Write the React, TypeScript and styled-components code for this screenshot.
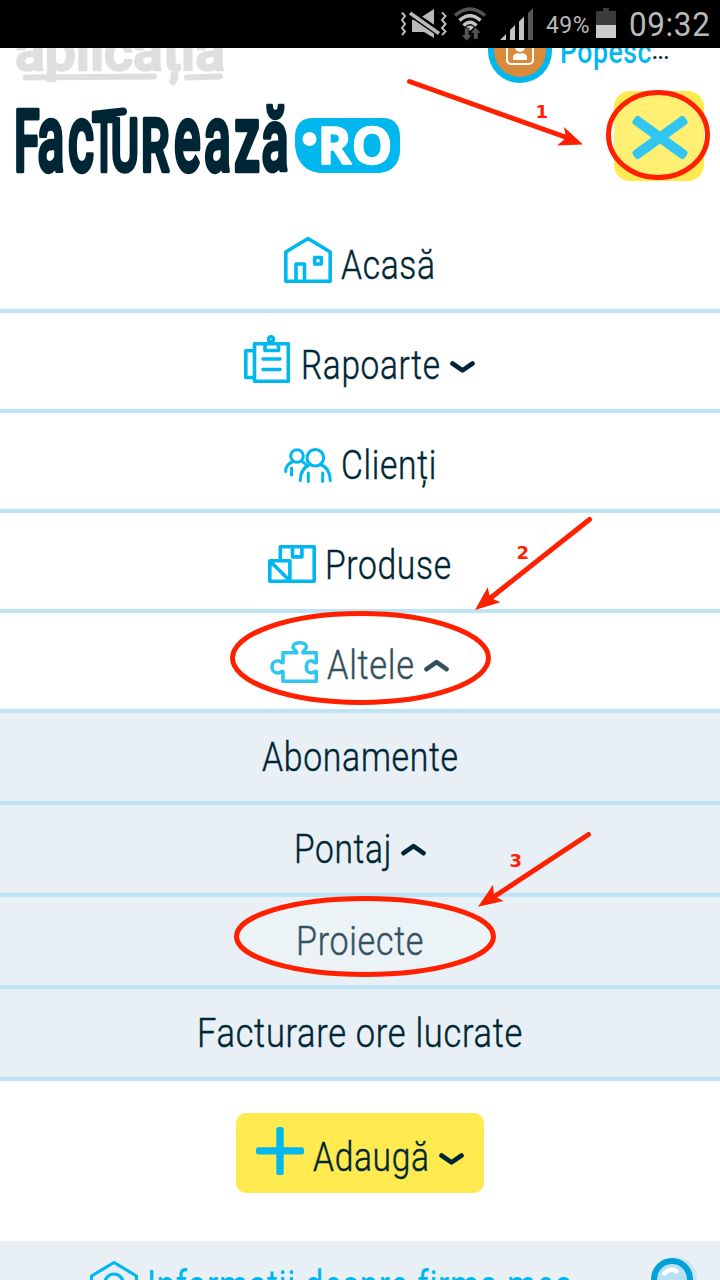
import React, { useLayoutEffect, useRef, useState } from 'react';
import styled, { createGlobalStyle } from 'styled-components';

const CYAN = '#00b7ee';
const NAVY = '#002635';
const RED = '#ff2000';

const GlobalStyle = createGlobalStyle`
  html, body { margin: 0; padding: 0; background: #fff; }
  body { font-family: Roboto, "Liberation Sans", sans-serif; overflow: hidden; }
  * { box-sizing: border-box; }
`;

const Screen = styled.div`
  position: relative;
  display: flex;
  flex-direction: column;
  width: 720px;
  height: 1280px;
  overflow: hidden;
  background: #fff;
`;

const StatusBar = styled.div`
  display: flex;
  flex: none;
  height: 48px;
  padding: 0 11px 0 400px;
  background: #000;
  color: #b9b9b9;
`;

const StatusIcons = styled.svg`
  flex: none;
  width: 140px;
  height: 48px;
`;

const BatteryIcon = styled.svg`
  flex: none;
  width: 20px;
  height: 48px;
  margin-left: 7px;
`;

const Percent = styled.div`
  flex: none;
  width: 43px;
  margin-left: 6px;
`;

const Clock = styled.div`
  flex: none;
  margin-left: 13px;
`;

const Header = styled.header`
  display: flex;
  flex: none;
  justify-content: space-between;
  height: 165px;
  padding: 0 16px;
  overflow: hidden;
`;

const Brand = styled.svg`
  flex: none;
  width: 386px;
  height: 165px;
`;

const HeaderSide = styled.div`
  display: flex;
  flex-direction: column;
  align-items: flex-end;
  width: 216px;
`;

const User = styled.div`
  display: flex;
  flex: none;
  width: 216px;
  height: 43px;
`;

const Avatar = styled.svg`
  flex: none;
  width: 64px;
  height: 36px;
`;

const UserName = styled.div`
  display: flex;
  height: 42px;
  margin: -17px 0 0 8px;
`;

const Ellipsis = styled.span`
  font-size: 20px;
  font-weight: 700;
  line-height: 42px;
  color: ${NAVY};
`;

const CloseButton = styled.button`
  display: block;
  flex: none;
  width: 90px;
  height: 90px;
  padding: 0;
  border: 0;
  border-radius: 16px;
  background: #ffeb50;
`;

const Menu = styled.nav`
  display: flex;
  flex: none;
  flex-direction: column;
`;

const Row = styled.a<{ $sub?: boolean }>`
  display: flex;
  justify-content: center;
  align-items: flex-start;
  height: ${(p) => (p.$sub ? 92 : 100)}px;
  padding-top: ${(p) => (p.$sub ? 14 : 22)}px;
  border-bottom: 4px solid #bfe4f5;
  background: ${(p) => (p.$sub ? '#e8f0f6' : '#fff')};
`;

const AddButton = styled.button`
  display: flex;
  flex: none;
  align-self: center;
  justify-content: center;
  align-items: flex-start;
  width: 248px;
  height: 80px;
  margin: 32px 0 48px;
  padding: 14px 0 0;
  border: 0;
  border-radius: 10px;
  background: #ffeb50;
  font-family: inherit;
`;

const RowIcon = styled.svg<{ $thin?: boolean }>`
  flex: none;
  width: 48px;
  height: 49px;
  margin-right: 9px;
  fill: none;
  stroke: ${CYAN};
  stroke-width: ${(p) => (p.$thin ? 3 : 3.6)};
  stroke-linecap: round;
  stroke-linejoin: round;
`;

const ChevronIcon = styled.svg`
  flex: none;
  width: 25px;
  height: 14px;
  margin: 24px 1px 0 9px;
  fill: none;
  stroke: ${NAVY};
  stroke-width: 4.6;
  stroke-linecap: round;
  stroke-linejoin: round;
`;

const LabelBox = styled.span<{ $w: number; $color?: string; $size?: number; $weight?: number; $top?: number }>`
  display: block;
  flex: none;
  width: ${(p) => p.$w}px;
  height: 48px;
  margin-top: ${(p) => p.$top ?? 6}px;
  font-size: ${(p) => p.$size ?? 41}px;
  font-weight: ${(p) => p.$weight ?? 300};
  line-height: 48px;
  color: ${(p) => p.$color ?? NAVY};
  white-space: nowrap;
  ${(p) => (p.$weight ? '' : '-webkit-text-stroke: 0.45px currentColor;')}
`;

const LabelInk = styled.span`
  display: inline-block;
  letter-spacing: 0.02em;
  transform-origin: 0 50%;
`;

const Footer = styled.footer`
  display: flex;
  flex: 1;
  padding: 0 22px 0 90px;
  background: #e8f0f6;
  overflow: hidden;
`;

const FirmIcon = styled.svg`
  flex: none;
  width: 48px;
  height: 39px;
  margin-right: 9px;
`;

const SearchIcon = styled.svg`
  flex: none;
  width: 52px;
  height: 39px;
  margin-left: auto;
`;

const Annotations = styled.svg`
  position: absolute;
  inset: 0;
  width: 720px;
  height: 1280px;
  pointer-events: none;
`;

type LabelProps = { text: string; w: number; color?: string; size?: number; weight?: number; top?: number };

/* Condenses the text horizontally so that it fills its width. */
function Label({ text, w, color, size, weight, top }: LabelProps) {
  const ref = useRef<HTMLSpanElement>(null);
  const [scale, setScale] = useState(1);
  useLayoutEffect(() => {
    if (ref.current) setScale(w / ref.current.offsetWidth);
  }, [text, w]);
  return (
    <LabelBox $w={w} $color={color} $size={size} $weight={weight} $top={top}>
      <LabelInk ref={ref} style={{ transform: `scaleX(${scale})` }}>{text}</LabelInk>
    </LabelBox>
  );
}

const Chevron = ({ up }: { up?: boolean }) => (
  <ChevronIcon viewBox="0 0 25 14">
    <path d={up ? 'M2.5 10.2 12.5 3.2 22.5 10.2' : 'M2.5 4.5 12.5 11.3 22.5 4.5'} />
  </ChevronIcon>
);

const icons: Record<string, React.ReactNode> = {
  home: <path d="M1.800 17 24 3.500 46.200 17V46.300H1.800ZM12 46V29H20.500V46M30.700 22.500H37.300V29H30.700Z" />,
  reports: (
    <>
      <path d="M10.500 8.800H44.300V46.200H10.500ZM10.500 15.800H1.800V42.500H10.500M21 9V15.500H34.500V9M19 24H36M19 34.500H36" />
      <circle cx="27" cy="4.300" r="2.500" />
    </>
  ),
  clients: (
    <>
      <circle cx="13" cy="21" r="6.300" />
      <circle cx="31.300" cy="22.700" r="8.300" />
      <path d="M1.700 36.500C1.700 31 5 28 9 26.500M17.500 26 21.500 29M16.300 45.500C16.300 37 20 32 26 29.500M36.500 29.500C43 32 46.300 38 46.300 45.500M7.500 33V40M24.300 38V46.500M38.700 38V46.500" />
    </>
  ),
  products: <path d="M12.300 24V11.800H46.200V46.200H22M24.500 12V21.900H33.900V12M1.800 25.800H21.900V46.200H1.800ZM3 27 21 45" />,
  puzzle: (
    <path d="M13 17.800H26.500C27.500 16 23 15 23 12C23 6.300 36.500 6.300 36.500 12C36.500 15 32 16 33 17.800H46.300V27.500C44.500 28.500 43.500 25.800 41 25.800C34.800 25.800 34.800 38 41 38C43.500 38 44.500 35.500 46.300 36.500V46.300H13V36.500C11.500 35.500 10.500 38 8 38C0 38 0 25.800 8 25.800C10.500 25.800 11.500 28.500 13 27.500Z" />
  ),
  plus: (
    <g fill={CYAN} stroke="none">
      <rect x="20.300" y="0" width="7.400" height="48" rx="2.500" />
      <rect x="0" y="20.200" width="48" height="7.400" rx="2.500" />
    </g>
  ),
};

const Icon = ({ name }: { name: string }) => (
  <RowIcon viewBox="0 0 48 49" $thin={name === 'clients'}>{icons[name]}</RowIcon>
);

type Item = { text: string; w: number; icon?: string; chevron?: 'up' | 'down'; sub?: boolean };

const items: Item[] = [
  { text: 'Acasă', w: 95, icon: 'home' },
  { text: 'Rapoarte', w: 140, icon: 'reports', chevron: 'down' },
  { text: 'Clienți', w: 96, icon: 'clients' },
  { text: 'Produse', w: 127, icon: 'products' },
  { text: 'Altele', w: 88, icon: 'puzzle', chevron: 'up' },
  { text: 'Abonamente', w: 197, sub: true },
  { text: 'Pontaj', w: 98, chevron: 'up', sub: true },
  { text: 'Proiecte', w: 128, sub: true },
  { text: 'Facturare ore lucrate', w: 326, sub: true },
];

/* Letters of the word mark: glyph, origin, font size, width scale. */
const wordmark: [string, number, number, number][] = [
  ['F', 14, 86, 0.54],
  ['a', 37.5, 94, 0.53],
  ['c', 68, 94, 0.53],
  ['T', 92, 82, 0.48],
  ['U', 111, 73, 0.58],
  ['R', 141, 73, 0.62],
  ['e', 174, 94, 0.53],
  ['a', 204, 94, 0.53],
  ['z', 234, 94, 0.55],
  ['ă', 261.5, 88, 0.57],
];

const BrandMark = () => (
  <Brand viewBox="16 48 386 165">
    <g fill="#dfdfdf" stroke="#dfdfdf" strokeLinecap="round" strokeLinejoin="round">
      <text x="15" y="70" fontFamily="Roboto" fontWeight="500" fontSize="56" strokeWidth="2.500" textLength="210" lengthAdjust="spacingAndGlyphs">aplicația</text>
      <path d="M25.500 77.500 154 76.500M187 77.500 220 76.500" strokeWidth="6" />
    </g>
    <g fill={NAVY} stroke={NAVY} strokeWidth="4.500" strokeLinejoin="round" fontFamily="Roboto" fontWeight="500">
      {wordmark.map(([ch, x, size, sx], i) => (
        <text key={i} fontSize={size} transform={`translate(${x} 170.500) scale(${sx} 1)`}>{ch}</text>
      ))}
      <path d="M96 114.500 123 111.500" strokeWidth="8" strokeLinecap="round" />
    </g>
    <path fill={CYAN} d="M313 118H383C394 118 400 125 400 137V150C400 164 391 173 377 173H323C307 173 296 163 295 145V137C295 125 301 118 313 118Z" />
    <circle cx="309.500" cy="139" r="7" fill="#fff" />
    <text x="317.500" y="164" fill="#fff" stroke="#fff" strokeWidth="1.500" strokeLinejoin="round" fontFamily="Open Sans" fontWeight="700" fontSize="52" textLength="75" lengthAdjust="spacingAndGlyphs">RO</text>
  </Brand>
);

export default function App() {
  return (
    <Screen>
      <GlobalStyle />
      <StatusBar>
        <StatusIcons viewBox="400 0 140 48">
          <path fill="none" stroke="#b9b9b9" strokeWidth="2" d="M402 12.500 405 16 402 20 405 24 402 28 405 31.500 402 35M442 12.500 445.500 16 442 20 445.500 24 442 28 445.500 31.500 442 35" />
          <path fill="#b9b9b9" d="M412 20 420 18 434 9V38L424 32H412Z" />
          <path stroke="#000" strokeWidth="7.500" d="M409 12 441 34" />
          <path stroke="#b9b9b9" strokeWidth="3.500" d="M410 13 439 33.500" />
          <g fill="none" strokeWidth="3.500">
            <path stroke="#555" d="M455 15.500Q470 2.500 485 15.500" />
            <path stroke="#c4c4c4" d="M459.500 20.500Q470 11 480.500 20.500M463.500 25.500Q470 19 476.500 25.500" />
          </g>
          <path fill="#c4c4c4" d="M466 27Q470 24 474 27L470 31Z" />
          <path fill="#555" stroke="#000" strokeWidth="0.500" d="M464.500 28H469V35H472L466.700 41 461.500 35H464.500ZM473.500 39H478V33H480.800L475.500 27 470.500 33H473.500Z" />
          <path fill="#c4c4c4" d="M500 40 506 34V40ZM510 30 515 25V40H510ZM519 21.500 524 16.500V40H519Z" />
          <path fill="#555" d="M528 13 533 8V40H528Z" />
        </StatusIcons>
        <Percent><Label text="49%" w={44} size={24} weight={400} top={1} color="#b9b9b9" /></Percent>
        <BatteryIcon viewBox="0 0 20 48">
          <path fill="#3c3c3c" d="M7 8H13V11H20V25H0V11H7Z" />
          <path fill="#ccc" d="M0 25H20V38H0Z" />
        </BatteryIcon>
        <Clock><Label text="09:32" w={81} size={33} weight={400} top={1} color="#b9b9b9" /></Clock>
      </StatusBar>
      <Header>
        <BrandMark />
        <HeaderSide>
          <User>
            <Avatar viewBox="0 0 64 36">
              <circle cx="32" cy="3" r="32" fill={CYAN} />
              <circle cx="32" cy="3" r="26" fill="#d98b3b" />
              <rect x="19" y="-10" width="26" height="26" rx="4" fill="none" stroke="#fff" strokeWidth="2" />
              <circle cx="32" cy="-1" r="5" fill="#fff" />
              <path fill="#fff" d="M25 12V9Q25 6 30 5L32 6 34 5Q39 6 39 9V12Z" />
            </Avatar>
            <UserName>
              <Label text="Popesc" w={92} size={33} weight={500} top={-3} color={CYAN} />
              <Ellipsis>...</Ellipsis>
            </UserName>
          </User>
          <CloseButton aria-label="close">
            <svg width="90" height="90" viewBox="0 0 90 90" fill={CYAN}>
              <rect x="14" y="41.500" width="64" height="10" rx="3.500" transform="rotate(36 46 46.500)" />
              <rect x="14" y="41.500" width="64" height="10" rx="3.500" transform="rotate(-36 46 46.500)" />
            </svg>
          </CloseButton>
        </HeaderSide>
      </Header>
      <Menu>
        {items.map((it) => (
          <Row key={it.text} $sub={it.sub}>
            {it.icon && <Icon name={it.icon} />}
            <Label text={it.text} w={it.w} />
            {it.chevron && <Chevron up={it.chevron === 'up'} />}
          </Row>
        ))}
      </Menu>
      <AddButton>
        <Icon name="plus" />
        <Label text="Adaugă" w={117} />
        <Chevron />
      </AddButton>
      <Footer>
        <FirmIcon viewBox="0 0 48 39" fill="none" stroke={CYAN} strokeWidth="3.200" strokeLinejoin="round">
          <path d="M1.500 50V35L24 21.500 46.500 35V50" />
          <circle cx="24" cy="42" r="9" />
        </FirmIcon>
        <Label text="Informații despre firma mea" w={426} color={CYAN} top={20} weight={400} />
        <SearchIcon viewBox="0 0 52 39">
          <circle cx="29" cy="38" r="22" fill="#c9e3ef" />
          <circle cx="26" cy="38" r="18" fill="#b9e0f2" stroke="#00a0d8" strokeWidth="6" />
          <path d="M18.500 32.500Q25 26 30.500 30.500" stroke="#fff" strokeWidth="4.500" fill="none" strokeLinecap="round" />
        </SearchIcon>
      </Footer>
      <Annotations viewBox="0 0 720 1280">
        <g fill="rgba(255,255,255,0.2)" stroke={RED} strokeWidth="5">
          <ellipse cx="658" cy="135" rx="49.500" ry="42.500" />
          <ellipse cx="360.500" cy="658" rx="128" ry="44.500" />
          <ellipse cx="365" cy="936.500" rx="128.500" ry="38" />
        </g>
        <g stroke={RED} strokeWidth="5" strokeLinecap="round">
          <path d="M409.500 81.500 568 138M589.500 519.500 488 600M588.500 834.500 492 898" />
        </g>
        <g fill={RED}>
          <path d="M583 144.500 564 127 566 138 557 145.500Z" />
          <path d="M475 610 487.700 587.300 490 597.500 500.300 602.300Z" />
          <path d="M478 906.700 493 884.700 494 896 503.700 901Z" />
        </g>
        <g fill={RED} fontFamily="DejaVu Sans" fontWeight="700" fontSize="18">
          <text x="535.500" y="118">1</text>
          <text x="516.500" y="559">2</text>
          <text x="509.500" y="867">3</text>
        </g>
      </Annotations>
    </Screen>
  );
}
